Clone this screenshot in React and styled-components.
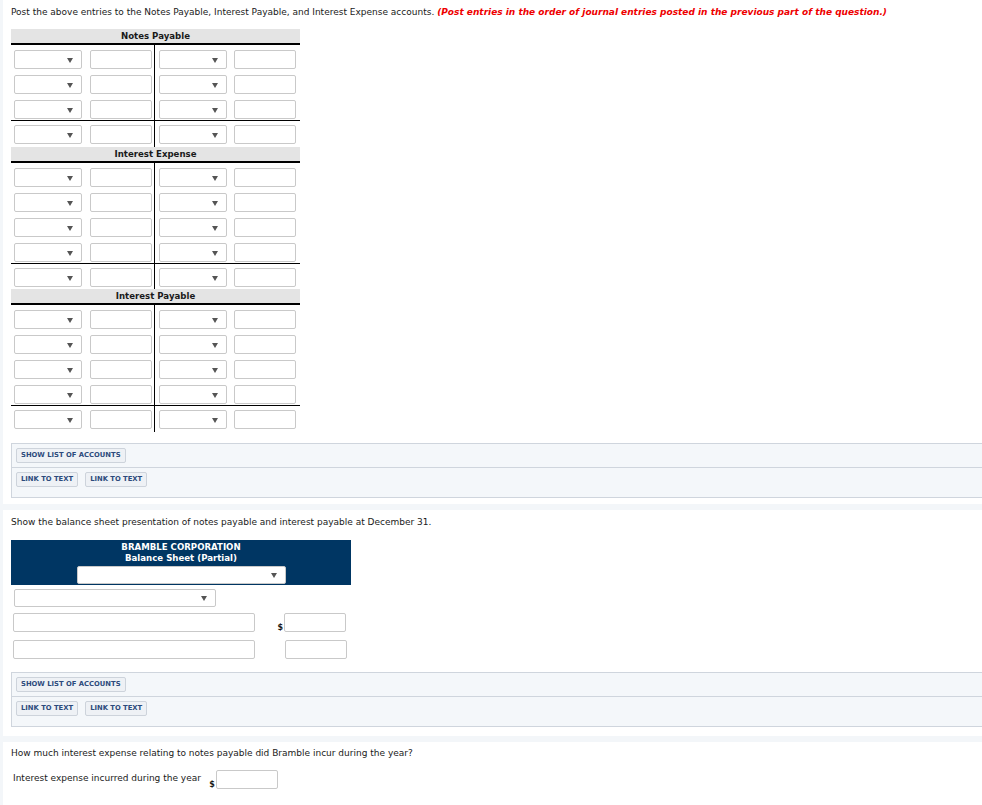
import React from "react";
import styled, { createGlobalStyle } from "styled-components";

const GlobalStyle = createGlobalStyle`
  html, body {
    margin: 0;
    padding: 0;
    background: #f3f6f9;
  }
  body {
    font-family: "DejaVu Sans", Verdana, sans-serif;
    color: #1a1a1a;
  }
  * { box-sizing: border-box; }
`;

const Page = styled.div`
  padding-left: 3px;
  display: flex;
  flex-direction: column;
  gap: 6px;
`;

const Card = styled.section`
  background: #fff;
  padding: ${(p) => p.$pad || "7px 0 7px 8px"};
`;

const Prompt = styled.p`
  margin: 0 0 ${(p) => p.$mb || "8px"} 0;
  font-size: 9px;
  line-height: 11px;
  white-space: nowrap;
`;

const Note = styled.span`
  color: #ee0000;
  font-weight: bold;
  font-style: italic;
`;

const TWrap = styled.div`
  width: 289px;
`;

const THeader = styled.div`
  height: 16px;
  background: #e4e4e4;
  border-bottom: 2px solid #000;
  font-size: 8.6px;
  font-weight: bold;
  line-height: 15px;
  text-align: center;
`;

const TRow = styled.div`
  display: grid;
  grid-template-columns: 144px 145px;
  border-top: ${(p) => (p.$total ? "1px solid #000" : "none")};
`;

const TCell = styled.div`
  display: flex;
  gap: ${(p) => (p.$left ? "8px" : "7px")};
  padding: ${(p) => (p.$total ? `4px 0 ${p.$tail}px` : "5px 0 1px")};
  padding-left: ${(p) => (p.$left ? "3px" : "4px")};
  border-right: ${(p) => (p.$left ? "1px solid #000" : "none")};
`;

const Select = styled.div`
  position: relative;
  width: ${(p) => p.$w}px;
  height: ${(p) => p.$h || 19}px;
  background: #fff;
  border: 1px solid #c9c9c9;
  border-radius: 2px;
  flex-shrink: 0;
  &::after {
    content: "";
    position: absolute;
    right: 8px;
    top: 50%;
    margin-top: -2px;
    border-left: 3px solid transparent;
    border-right: 3px solid transparent;
    border-top: 5px solid #555;
  }
`;

const Input = styled.input`
  width: ${(p) => p.$w}px;
  height: ${(p) => p.$h || 19}px;
  border: 1px solid #c9c9c9;
  border-radius: 2px;
  background: #fff;
  padding: 0 3px;
  margin: 0;
  flex-shrink: 0;
  font: inherit;
  outline: none;
`;

const Panel = styled.div`
  margin-top: ${(p) => p.$mt || "11px"};
  background: #f4f7fa;
  border: 1px solid #cfd5dd;
  border-right: none;
  height: 55px;
`;

const PanelRow = styled.div`
  display: flex;
  gap: 7px;
  padding: 4px 4px;
  border-bottom: ${(p) => (p.$sep ? "1px solid #cfd5dd" : "none")};
`;

const Btn = styled.button`
  height: 15px;
  padding: 0 4px;
  background: #eef1f5;
  border: 1px solid #cdd3db;
  border-radius: 2px;
  color: #2c4a7c;
  font-family: "DejaVu Sans", Verdana, sans-serif;
  font-size: 6.8px;
  font-weight: bold;
  line-height: 13px;
  text-transform: uppercase;
  cursor: pointer;
`;

const BSHead = styled.div`
  width: 340px;
  background: #003663;
  color: #fff;
  padding: 2px 0 1px;
  display: flex;
  flex-direction: column;
  align-items: center;
`;

const BSTitle = styled.div`
  font-size: 8.6px;
  font-weight: bold;
  line-height: 11px;
  text-align: center;
`;

const BSSelectRow = styled.div`
  margin-top: 2px;
`;

const Line = styled.div`
  display: flex;
  align-items: flex-end;
  margin-top: ${(p) => p.$mt || "6px"};
  padding-left: ${(p) => p.$pl || "2px"};
`;

const Dollar = styled.span`
  font-size: 8px;
  font-weight: bold;
  line-height: 9px;
  width: ${(p) => p.$w || "29px"};
  text-align: right;
  padding-right: 1px;
`;

const Spacer = styled.span`
  width: ${(p) => p.$w}px;
`;

const Label = styled.span`
  font-size: 9px;
  line-height: 11px;
  align-self: center;
  margin-top: -2px;
`;

function TAccount({ title, rows, tail = 2 }) {
  const body = Array.from({ length: rows }, (_, i) => (
    <TRow key={i}>
      <TCell $left>
        <Select $w={68} />
        <Input $w={62} />
      </TCell>
      <TCell>
        <Select $w={68} />
        <Input $w={62} />
      </TCell>
    </TRow>
  ));
  return (
    <div>
      <THeader>{title}</THeader>
      {body}
      <TRow $total>
        <TCell $left $total $tail={tail}>
          <Select $w={68} />
          <Input $w={62} />
        </TCell>
        <TCell $total $tail={tail}>
          <Select $w={68} />
          <Input $w={62} />
        </TCell>
      </TRow>
    </div>
  );
}

function ButtonPanel({ mt }) {
  return (
    <Panel $mt={mt}>
      <PanelRow $sep>
        <Btn>Show List of Accounts</Btn>
      </PanelRow>
      <PanelRow>
        <Btn>Link to Text</Btn>
        <Btn>Link to Text</Btn>
      </PanelRow>
    </Panel>
  );
}

export default function App() {
  return (
    <>
      <GlobalStyle />
      <Page>
        <Card $pad="7px 0 6px 8px">
          <Prompt $mb="11px">
            Post the above entries to the Notes Payable, Interest Payable, and Interest Expense accounts.{" "}
            <Note>(Post entries in the order of journal entries posted in the previous part of the question.)</Note>
          </Prompt>
          <TWrap>
            <TAccount title="Notes Payable" rows={3} tail={3} />
            <TAccount title="Interest Expense" rows={4} tail={2} />
            <TAccount title="Interest Payable" rows={4} tail={3} />
          </TWrap>
          <ButtonPanel mt="11px" />
        </Card>

        <Card $pad="7px 0 9px 8px">
          <Prompt $mb="12px">
            Show the balance sheet presentation of notes payable and interest payable at December 31.
          </Prompt>
          <BSHead>
            <BSTitle>BRAMBLE CORPORATION</BSTitle>
            <BSTitle>Balance Sheet (Partial)</BSTitle>
            <BSSelectRow>
              <Select $w={209} $h={18} />
            </BSSelectRow>
          </BSHead>
          <Line $mt="4px" $pl="3px">
            <Select $w={202} $h={18} />
          </Line>
          <Line $mt="6px">
            <Input $w={242} />
            <Dollar>$</Dollar>
            <Input $w={62} />
          </Line>
          <Line $mt="8px">
            <Input $w={242} />
            <Spacer $w={30} />
            <Input $w={62} />
          </Line>
          <ButtonPanel mt="13px" />
        </Card>

        <Card $pad="6px 0 20px 8px">
          <Prompt $mb="11px">
            How much interest expense relating to notes payable did Bramble incur during the year?
          </Prompt>
          <Line $mt="0" $pl="2px">
            <Label>Interest expense incurred during the year</Label>
            <Dollar $w="15px">$</Dollar>
            <Input $w={62} />
          </Line>
        </Card>
      </Page>
    </>
  );
}
